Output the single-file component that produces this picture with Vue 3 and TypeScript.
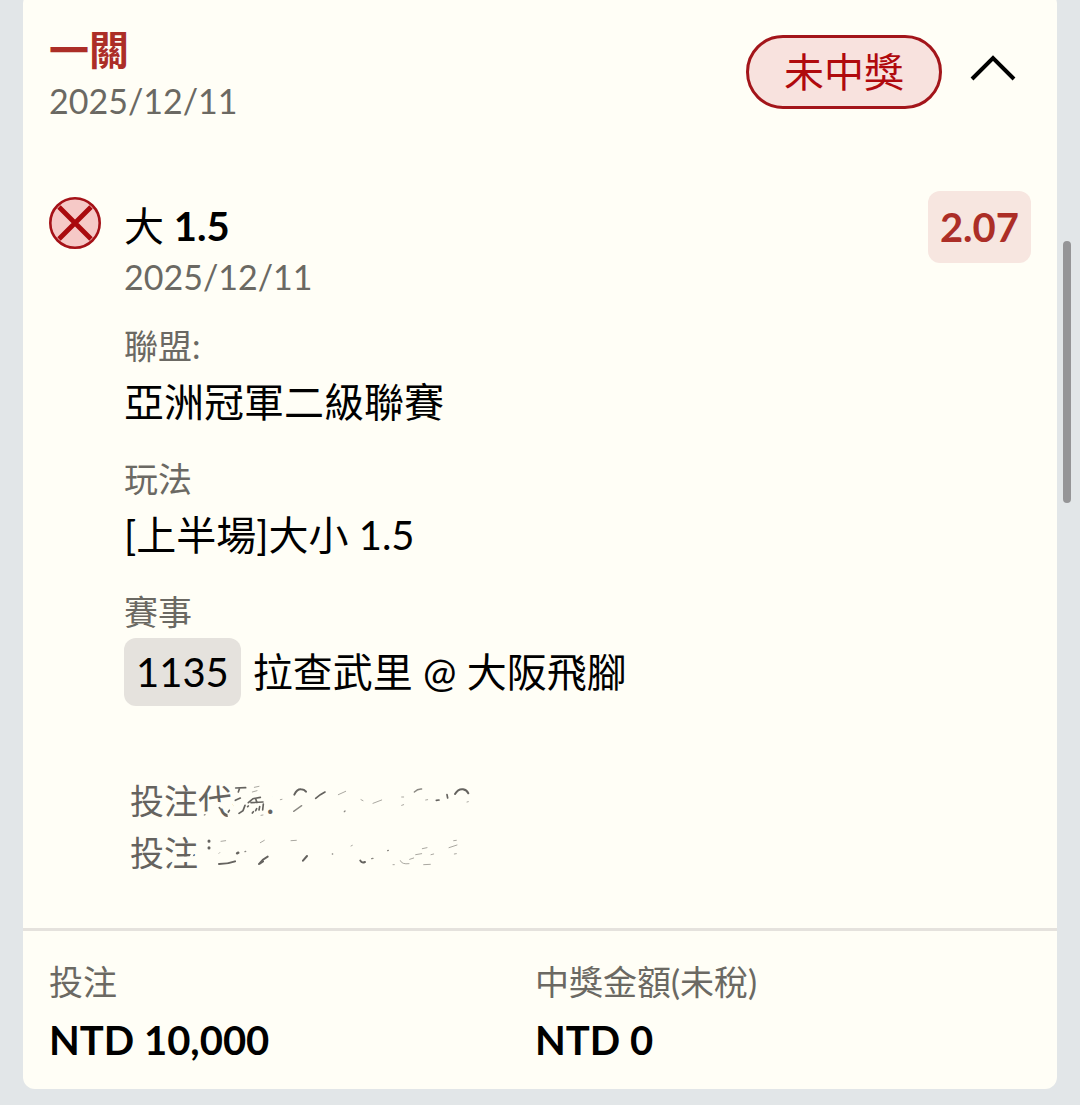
<script setup lang="ts">
import { ref } from 'vue'

interface Field {
  label: string
  value: string
  code?: string
}

const open = ref(true)

const fields: Field[] = [
  { label: '聯盟:', value: '亞洲冠軍二級聯賽' },
  { label: '玩法', value: '[上半場]大小 1.5' },
  { label: '賽事', value: '拉查武里 @ 大阪飛腳', code: '1135' },
]

const totals: Field[] = [
  { label: '投注', value: 'NTD 10,000' },
  { label: '中獎金額(未稅)', value: 'NTD 0' },
]
</script>

<template>
  <main class="page">
    <article class="card">
      <header class="head">
        <div class="head-text">
          <h1 class="title">一關</h1>
          <p class="date">2025/12/11</p>
        </div>
        <span class="status">未中獎</span>
        <button class="toggle" type="button" aria-label="收合" :aria-expanded="open" @click="open = !open">
          <svg viewBox="0 0 46 28" width="46" height="28" :class="{ closed: !open }">
            <path d="M2 25 L23 4 L44 25" fill="none" stroke="#000" stroke-width="4" />
          </svg>
        </button>
      </header>

      <section v-show="open" class="leg">
        <svg class="lost" viewBox="0 0 52 52" width="52" height="52" aria-hidden="true">
          <circle cx="26" cy="26" r="24.7" fill="#f6c9c7" stroke="#a51218" stroke-width="2.6" />
          <path d="M10 10 L42 42 M42 10 L10 42" stroke="#aa0a0e" stroke-width="4.8" />
        </svg>
        <div class="leg-body">
          <h2 class="pick"><span class="side">大</span> 1.5</h2>
          <p class="date">2025/12/11</p>
          <dl class="fields">
            <div v-for="f in fields" :key="f.label" class="field">
              <dt>{{ f.label }}</dt>
              <dd><span v-if="f.code" class="code">{{ f.code }}</span>{{ f.value }}</dd>
            </div>
          </dl>
          <div class="serials">
            <p>投注代碼:</p>
            <p>投注</p>
            <svg class="smudge" viewBox="93 45 1107 312" width="369" height="104" aria-hidden="true">
              <g fill="none" stroke="#fffef6" stroke-linecap="round">
                <path d="M308 166 L348 160 L346 134 L390 138 L396 172" stroke-width="18" />
                <path d="M412 88 L494 84 M412 108 L496 106 M412 128 L494 128 M412 148 L494 148 M412 168 L494 168" stroke-width="24" />
                <path d="M512 112 L520 128" stroke-width="18" />
                <path d="M204 304 L226 292 M226 300 L292 296" stroke-width="16" />
                <path d="M196 312 L214 298 M288 268 L276 290" stroke-width="8" />
              </g>
              <g fill="none" stroke="#65635f" stroke-linecap="round">
                <path d="M410 84 L440 83 M422 84 L418 96 M409 121 L424 114" stroke-width="5" />
                <path d="M420 160 L432 152 L438 136 M448 128 L462 116 L484 112 M456 128 L492 126 M470 116 L474 128 M446 140 L448 138" stroke-width="5" />
                <path d="M460 159 L463 155 M470 152 L473 146 M480 150 L482 140 M491 150 L493 132 M361 143 L363 145 M371 158 L378 163 M388 156 L391 151" stroke-width="5" />
                <path d="M586 104 Q594 87 606 88 Q616 88 621 95 M1068 102 Q1078 86 1092 88 Q1104 90 1108 100" stroke-width="6" />
                <path d="M650 115 L664 104 L678 96 M1044 104 L1046 114 M1012 121 L1020 120" stroke-width="5" />
                <path d="M330 243 L330 244 M330 263 L330 264" stroke-width="9" />
                <path d="M360 312 Q386 312 408 304 M480 312 Q490 298 506 290 M482 311 L492 304 M612 302 L624 288 M784 302 Q788 310 798 306" stroke-width="6" />
                <path d="M414 280 L418 278" stroke-width="7" />
              </g>
              <g fill="none" stroke="#8b8983" stroke-linecap="round" stroke-width="4">
                <path d="M584 154 L608 137 M946 96 Q956 86 968 87 M736 155 L738 153 M438 275 L440 274 M818 296 L822 295 M866 272 L868 271 M700 282 L701 282 M316 165 L318 164" />
              </g>
              <g fill="none" stroke="#aaa8a1" stroke-linecap="round" stroke-width="3">
                <path d="M460 96 L474 92 M466 82 L480 79 M486 166 L492 165" />
                <path d="M718 104 L740 94 M786 119 L792 122 M822 130 L848 120 M908 111 L914 111 M908 136 L914 134 M544 119 L549 118 M1104 126 L1108 125 M980 120 L986 119" />
                <path d="M366 244 L380 242 M360 280 L362 278 M484 248 L496 241 M576 242 L592 241 M756 258 L760 256" />
                <path d="M904 302 Q908 314 930 311 M882 314 L886 314 M974 314 L994 313 M932 298 L944 294 M950 284 L968 281 M970 266 L984 263 M996 284 L1004 282 M1064 242 L1072 241 M1050 263 L1074 255 M1066 282 L1072 281" />
              </g>
            </svg>
          </div>
        </div>
        <strong class="odds">2.07</strong>
      </section>

      <dl class="totals">
        <div v-for="t in totals" :key="t.label">
          <dt>{{ t.label }}</dt>
          <dd>{{ t.value }}</dd>
        </div>
      </dl>
    </article>
    <div class="scroll-thumb"></div>
  </main>
</template>

<style>
body {
  margin: 0;
  background: #e2e6e8;
}
</style>

<style scoped>
.page {
  box-sizing: border-box;
  position: relative;
  min-height: 100vh;
  padding: 0 23px 16px;
  overflow: hidden;
  background: #e2e6e8;
  color: #000;
  font-family: Lato, "Noto Sans CJK TC", sans-serif;
  font-size: 40px;
  line-height: 52px;
}

h1,
h2,
p,
dl,
dd {
  margin: 0;
  font-size: inherit;
}

.card {
  margin-top: -8px;
  border-radius: 12px;
  background: #fffef6;
}

.head {
  display: flex;
  align-items: flex-start;
  padding: 32px 41px 0 26px;
}

.head-text {
  flex: 1;
}

.title {
  color: #ac2e27;
  font-weight: 700;
}

.date {
  color: #6b6963;
  font-size: 34px;
  line-height: 50px;
}

.status {
  margin-top: 11px;
  padding: 8px 35px;
  border: 3px solid #a3151a;
  border-radius: 37px;
  background: #f8e2de;
  color: #b00a0e;
}

.toggle {
  display: flex;
  margin: 30px 0 0 28px;
  padding: 0;
  border: 0;
  background: none;
  cursor: pointer;
}

.closed {
  transform: rotate(180deg);
}

.leg {
  display: flex;
  align-items: flex-start;
  padding: 65px 26px 49px;
}

.lost {
  flex: none;
  margin-top: 6px;
}

.leg-body {
  flex: 1;
  margin: 9px 0 0 23px;
}

.pick {
  font-weight: 700;
}

.side {
  font-weight: 400;
}

.odds {
  padding: 10px 12px;
  border-radius: 12px;
  background: #f7e6e0;
  color: #ac2e27;
}

.fields {
  display: flex;
  flex-direction: column;
  gap: 25px;
  margin-top: 22px;
}

dt {
  margin-bottom: 4px;
  color: #6b6963;
  font-size: 34px;
  line-height: 44px;
}

dd {
  line-height: 60px;
}

.field dd {
  display: flex;
  align-items: center;
}

.code {
  margin-right: 12px;
  padding: 4px 12px;
  border-radius: 12px;
  background: #e5e2dd;
}

.serials {
  position: relative;
  margin: 69px 0 0 6px;
  color: #65635f;
  font-size: 34px;
}

.smudge {
  position: absolute;
  top: 0;
  left: 0;
}

.totals {
  display: grid;
  grid-template-columns: 1fr 1fr;
  padding: 29px 36px 19px 26px;
  border-top: 3px solid #e5e2dd;
}

.totals dt {
  margin-bottom: 6px;
}

.totals dd {
  font-weight: 700;
}

.scroll-thumb {
  position: absolute;
  top: 241px;
  right: 9px;
  width: 8px;
  height: 262px;
  border-radius: 4px;
  background: #959597;
}
</style>
